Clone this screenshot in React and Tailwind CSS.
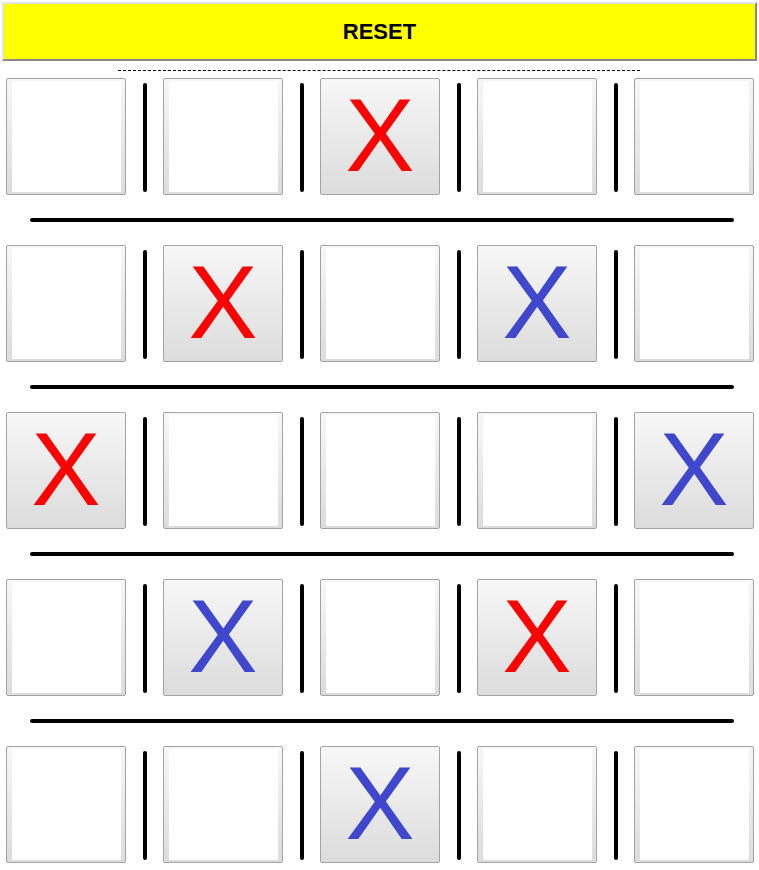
const BOARD = [
  ['', '', 'r', '', ''],
  ['', 'r', '', 'b', ''],
  ['r', '', '', '', 'b'],
  ['', 'b', '', 'r', ''],
  ['', '', 'b', '', ''],
]

function Cell({ mark }) {
  if (mark) {
    return (
      <button className="w-[120px] h-[117px] shrink-0 rounded-[2px] border border-[#a3a3a3] bg-gradient-to-b from-[#f7f7f7] to-[#dcdcdc] flex items-center justify-center p-0 pb-[4px]">
        <span
          className={`text-[104px] leading-none font-normal ${mark === 'r' ? 'text-[#ff0000]' : 'text-[#3f48cc]'}`}
          style={{ fontFamily: '"Liberation Sans", Arial, sans-serif' }}
        >
          X
        </span>
      </button>
    )
  }
  return (
    <button className="w-[120px] h-[117px] shrink-0 rounded-[2px] border border-[#a3a3a3] bg-gradient-to-b from-[#f7f7f7] to-[#dcdcdc] pl-[5px] pr-[4px] pt-[2px] pb-[2px] flex">
      <div className="flex-1 bg-white" />
    </button>
  )
}

function Bar() {
  return (
    <div className="w-[37px] h-[117px] shrink-0 flex justify-center pt-[5px] pb-[3px]">
      <div className="w-[4px] h-full bg-black rounded-full" />
    </div>
  )
}

export default function App() {
  return (
    <div className="w-[759px] h-[870px] bg-white overflow-hidden" style={{ fontFamily: '"Liberation Sans", Arial, sans-serif' }}>
      <div className="pt-[2px] px-[2px]">
        <button className="w-[755px] h-[59px] bg-[#ffff00] border-2 border-t-[#e3e3e3] border-l-[#e3e3e3] border-r-[#8a8a8a] border-b-[#8a8a8a] text-[22px] font-bold text-black">
          RESET
        </button>
      </div>
      <div className="ml-[118px] mt-[9px] w-[522px] border-t border-dashed border-black" />
      <div className="mt-[7px] flex flex-col">
        {BOARD.map((row, i) => (
          <div key={i}>
            <div className="flex pl-[6px]">
              {row.map((mark, j) => (
                <div key={j} className="flex">
                  {j > 0 && <Bar />}
                  <Cell mark={mark} />
                </div>
              ))}
            </div>
            {i < BOARD.length - 1 && (
              <div className="ml-[30px] w-[704px] h-[4px] bg-black rounded-full mt-[23px] mb-[23px]" />
            )}
          </div>
        ))}
      </div>
    </div>
  )
}
